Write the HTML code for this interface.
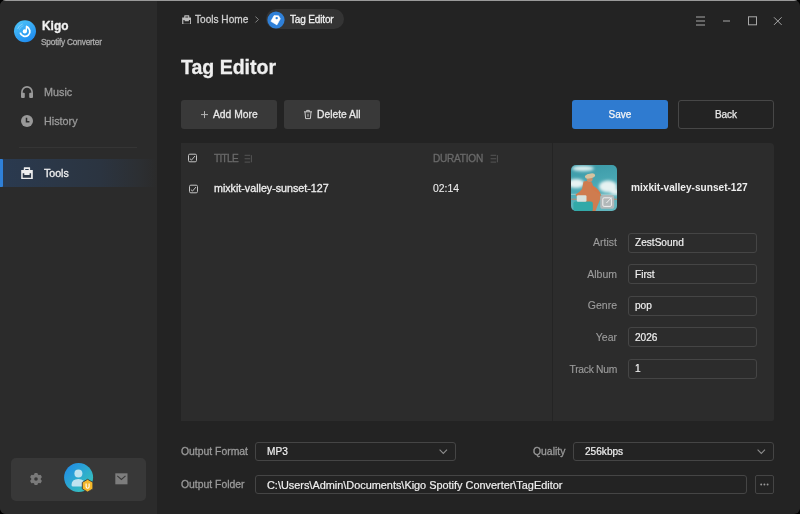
<!DOCTYPE html>
<html><head><meta charset="utf-8">
<style>
*{margin:0;padding:0;box-sizing:border-box}
html,body{width:800px;height:514px;overflow:hidden;background:#000}
body{font-family:"Liberation Sans",sans-serif;position:relative}
#win{position:absolute;left:0;top:0;width:800px;height:514px;border-radius:6px;overflow:hidden;background:#232323}
.a{position:absolute}
.t{position:absolute;line-height:1;white-space:nowrap;will-change:transform;-webkit-text-stroke-width:0.3px}
#side{position:absolute;left:0;top:0;width:157px;height:514px;background:#2b2b2b}
#topline{position:absolute;left:0;top:0;width:800px;height:1px;background:#9a9a9a}
.btn{position:absolute;border-radius:3px}
.inp{position:absolute;border:1px solid #454545;border-radius:3px}
.lbl{position:absolute;will-change:transform;line-height:1;white-space:nowrap;color:#9c9c9c;font-size:10.5px;text-align:right;margin-top:-0.5px;-webkit-text-stroke:0.12px #9c9c9c}
.val{position:absolute;will-change:transform;line-height:1;white-space:nowrap;color:#efefef;font-size:10.1px;margin-top:0.9px;-webkit-text-stroke:0.2px #efefef}
</style></head><body>
<div id="win">
  <div id="side">
    <!-- logo -->
    <svg class="a" style="left:13px;top:19px" width="24" height="24" viewBox="0 0 24 24">
      <defs><linearGradient id="lg" x1="0.2" y1="0" x2="0.8" y2="1"><stop offset="0" stop-color="#4cc3f8"/><stop offset="1" stop-color="#1c88ef"/></linearGradient></defs>
      <circle cx="12" cy="12.2" r="11" fill="url(#lg)"/>
      <path d="M13.4 7.8 A4.9 4.9 0 1 1 7.2 13.6" fill="none" stroke="#fff" stroke-width="1.8" stroke-linecap="butt"/>
      <circle cx="11.8" cy="12.4" r="2.1" fill="#fff"/>
      <path d="M13.2 12.4 L13.5 7.3 L15.6 8.6" fill="none" stroke="#fff" stroke-width="1.4" stroke-linejoin="round"/>
      <path d="M4.6 10 A7.8 7.8 0 0 1 9.6 5" fill="none" stroke="#ffffff" stroke-opacity="0.35" stroke-width="1"/>
      <path d="M6.3 10.8 A6.2 6.2 0 0 1 10.4 6.7" fill="none" stroke="#ffffff" stroke-opacity="0.3" stroke-width="0.8"/>
    </svg>
    <div class="t" style="left:41.6px;top:20.7px;font-size:11.9px;font-weight:700;color:#f2f2f2">Kigo</div>
    <div class="t" style="left:41px;top:37.6px;font-size:8.3px;letter-spacing:-0.2px;color:#acacac">Spotify Converter</div>

    <!-- music -->
    <svg class="a" style="left:20px;top:85px" width="14" height="14" viewBox="0 0 14 14">
      <path d="M1.9 9 V7 A5.1 5.1 0 0 1 12.1 7 V9" fill="none" stroke="#9a9a9a" stroke-width="1.6"/>
      <rect x="1" y="7.8" width="3.8" height="5.2" rx="1" fill="#9a9a9a"/>
      <rect x="9.2" y="7.8" width="3.8" height="5.2" rx="1" fill="#9a9a9a"/>
    </svg>
    <div class="t" style="left:43.5px;top:86.9px;font-size:10.8px;color:#9a9a9a">Music</div>

    <!-- history -->
    <svg class="a" style="left:20px;top:114px" width="14" height="14" viewBox="0 0 14 14">
      <circle cx="7" cy="7" r="6" fill="#999"/>
      <path d="M6.5 3.8 V7.7 H9.4" fill="none" stroke="#2b2b2b" stroke-width="1.5"/>
    </svg>
    <div class="t" style="left:43.5px;top:115.9px;font-size:10.8px;color:#9a9a9a">History</div>

    <div class="a" style="left:19px;top:147px;width:118px;height:1px;background:#353535"></div>

    <!-- tools active -->
    <div class="a" style="left:0;top:159px;width:157px;height:28px;background:linear-gradient(90deg,#2a3a50 0%,#2b3747 35%,#2b3440 64%,#2c2f33 88%,#2b2b2b 100%)"></div>
    <div class="a" style="left:0;top:159px;width:3px;height:28px;background:#2f80d8;border-radius:0 1px 1px 0"></div>
    <svg class="a" style="left:21px;top:167px" width="12" height="12" viewBox="0 0 12 12">
      <path d="M0.2 3.1 H11.8 V12 H0.2 Z M2.8 3.1 V0.8 Q2.8 0.3 3.3 0.3 H8.6 Q9.1 0.3 9.1 0.8 V3.1 H7.7 V1.9 H4.2 V3.1 Z" fill="#eeeeee"/><path d="M1.7 6.3 H3.3 V7.9 H8.6 V6.3 H10.1 V10.8 H1.7 Z" fill="#2c3848"/>
    </svg>
    <div class="t" style="left:43.5px;top:168px;font-size:10.6px;color:#f0f0f0">Tools</div>

    <!-- bottom card -->
    <div class="a" style="left:11px;top:457.5px;width:135px;height:43px;border-radius:5px;background:#383838"></div>
    <svg class="a" style="left:28.7px;top:472px" width="14" height="14" viewBox="0 0 14 14">
      <g fill="#7a7a7a" transform="translate(7 7)">
        <circle r="4.8"/>
        <rect x="-1.8" y="-6.1" width="3.6" height="12.2" rx="1.1"/>
        <rect x="-1.8" y="-6.1" width="3.6" height="12.2" rx="1.1" transform="rotate(60)"/>
        <rect x="-1.8" y="-6.1" width="3.6" height="12.2" rx="1.1" transform="rotate(120)"/>
      </g>
      <circle cx="7" cy="7" r="1.8" fill="#383838"/>
    </svg>
    <svg class="a" style="left:64px;top:463px" width="30" height="30" viewBox="0 0 30 30">
      <defs><linearGradient id="av" x1="0" y1="0" x2="1" y2="1"><stop offset="0" stop-color="#1e88ec"/><stop offset="1" stop-color="#3ccbb2"/></linearGradient></defs>
      <circle cx="14.6" cy="14.6" r="14.5" fill="url(#av)"/>
      <circle cx="14.4" cy="10.5" r="4" fill="#bfe3f0"/>
      <path d="M7.5 22 Q7.5 16 14.4 16 Q21 16 21 22 Q21 23.5 19.5 23.5 H9 Q7.5 23.5 7.5 22Z" fill="#bfe3f0"/>
    </svg>
    <svg class="a" style="left:81px;top:478px" width="14" height="15" viewBox="0 0 14 15">
      <path d="M6.6 1.3 L11.9 4.4 V10.9 L6.6 14 L1.3 10.9 V4.4 Z" fill="#f4b72a" stroke="#3a3a3a" stroke-width="0.9" stroke-linejoin="round"/>
      <path d="M5.1 5.5 V8.7 Q5.1 10.3 6.6 10.3 Q8.1 10.3 8.1 8.7 V5.5" fill="none" stroke="#fff" stroke-width="1.1"/>
    </svg>
    <svg class="a" style="left:115px;top:473px" width="14" height="12" viewBox="0 0 14 12">
      <rect x="0.3" y="0.3" width="12.2" height="11" fill="#7d7d7d"/>
      <path d="M2.3 2.9 L6.4 6.4 L10.5 2.9" fill="none" stroke="#3a3a3a" stroke-width="1.2"/>
    </svg>
  </div>
  <div id="topline"></div>

  <!-- breadcrumb -->
  <svg class="a" style="left:181.7px;top:14.6px" width="9.6" height="9.6" viewBox="0 0 12 12">
    <path d="M0.2 3.1 H11.8 V12 H0.2 Z M2.8 3.1 V0.8 Q2.8 0.3 3.3 0.3 H8.6 Q9.1 0.3 9.1 0.8 V3.1 H7.7 V1.9 H4.2 V3.1 Z" fill="#bdbdbd"/><path d="M1.7 6.3 H3.3 V7.9 H8.6 V6.3 H10.1 V10.8 H1.7 Z" fill="#232323"/>
  </svg>
  <div class="t" style="left:195px;top:14.5px;font-size:10.1px;color:#cfcfcf">Tools Home</div>
  <svg class="a" style="left:254px;top:15px" width="6" height="9" viewBox="0 0 6 9">
    <path d="M1.4 1.5 L4.4 4.5 L1.4 7.5" fill="none" stroke="#858585" stroke-width="1"/>
  </svg>
  <div class="a" style="left:266px;top:9px;width:78px;height:20px;border-radius:10px;background:#343434"></div>
  <svg class="a" style="left:266.6px;top:10.5px" width="18" height="18" viewBox="0 0 18 18">
    <circle cx="9" cy="9" r="8.6" fill="#2f80d8"/>
    <path d="M7.1 4.6 L11.6 4.8 L13.3 7.8 L9.9 13.9 L3.9 10.3 Z" fill="#fff" stroke="#fff" stroke-width="0.6" stroke-linejoin="round"/>
    <circle cx="9.7" cy="7.1" r="1.2" fill="#2f80d8"/>
  </svg>
  <div class="t" style="left:289.5px;top:14.6px;font-size:10px;letter-spacing:-0.15px;color:#f2f2f2">Tag Editor</div>

  <!-- window controls -->
  <svg class="a" style="left:690px;top:10px" width="100" height="20" viewBox="0 0 100 20">
    <g stroke="#a8a8a8" stroke-width="1" fill="none">
      <path d="M6 7 H15 M6 11 H15 M6 15 H15"/>
      <path d="M33 11 H40"/>
      <rect x="58.5" y="6.8" width="8" height="8"/>
      <path d="M84 7.3 L91.6 14.9 M91.6 7.3 L84 14.9"/>
    </g>
  </svg>

  <div class="t" style="left:180.5px;top:57.9px;font-size:19.5px;font-weight:700;color:#efefef">Tag Editor</div>

  <!-- buttons -->
  <div class="btn" style="left:181px;top:100px;width:96px;height:29px;background:#393939"></div>
  <svg class="a" style="left:200px;top:110px" width="10" height="10" viewBox="0 0 10 10">
    <path d="M4.5 1.1 V8.1 M1 4.6 H8" stroke="#b4b4b4" stroke-width="1"/>
  </svg>
  <div class="t" style="left:213px;top:109.5px;font-size:10.3px;color:#e8e8e8">Add More</div>
  <div class="btn" style="left:284px;top:100px;width:96px;height:29px;background:#393939"></div>
  <svg class="a" style="left:303px;top:109px" width="10" height="11" viewBox="0 0 10 11">
    <path d="M1 2.8 H9 M3.6 2.6 V1.4 H6.4 V2.6 M2 3 L2.6 9.6 H7.4 L8 3" fill="none" stroke="#ccc" stroke-width="1"/>
    <path d="M5 4.8 V7.8" stroke="#c4c4c4" stroke-width="0.9"/>
  </svg>
  <div class="t" style="left:316.5px;top:109.5px;font-size:10.3px;color:#e8e8e8">Delete All</div>

  <div class="btn" style="left:572px;top:100px;width:96px;height:29px;background:#2f7bd0"></div>
  <div class="t" style="left:572px;width:96px;text-align:center;top:109.9px;font-size:10px;color:#f5f5f5;-webkit-text-stroke:0.25px #f5f5f5">Save</div>
  <div class="btn" style="left:678px;top:100px;width:96px;height:29px;border:1px solid #474747"></div>
  <div class="t" style="left:678px;width:96px;text-align:center;top:109.9px;font-size:10px;color:#e8e8e8;-webkit-text-stroke:0.25px #e8e8e8">Back</div>

  <!-- panel -->
  <div class="a" style="left:181px;top:143px;width:593px;height:278px;background:#2c2c2c;border-radius:0 4px 2px 0"></div>
  <div class="a" style="left:552px;top:143px;width:1px;height:278px;background:#242424"></div>

  <svg class="a" style="left:187px;top:152px" width="12" height="12" viewBox="0 0 12 12">
    <rect x="1.5" y="2.2" width="8" height="7.6" rx="1.3" fill="none" stroke="#c4c4c4" stroke-width="1"/>
    <path d="M2.9 6.6 L4.5 8.1 L8 4" fill="none" stroke="#c4c4c4" stroke-width="1"/>
  </svg>
  <div class="t" style="left:214px;top:153.9px;font-size:10.1px;letter-spacing:-0.7px;color:#6a6a6a">TITLE</div>
  <svg class="a" style="left:243px;top:154px" width="10" height="10" viewBox="0 0 10 10">
    <path d="M1.6 1.3 H7.2 M1.6 4.75 H7.2 M1.6 8.1 H7.2 M8.4 1.2 V8.3" stroke="#5a5a5a" stroke-width="0.9"/>
  </svg>
  <div class="t" style="left:432.5px;top:153.9px;font-size:10.1px;letter-spacing:-0.25px;color:#6a6a6a">DURATION</div>
  <svg class="a" style="left:488.5px;top:154px" width="10" height="10" viewBox="0 0 10 10">
    <path d="M1.6 1.3 H7.2 M1.6 4.75 H7.2 M1.6 8.1 H7.2 M8.4 1.2 V8.3" stroke="#5a5a5a" stroke-width="0.9"/>
  </svg>

  <svg class="a" style="left:187.5px;top:182.5px" width="12" height="12" viewBox="0 0 12 12">
    <rect x="1.5" y="2.2" width="8" height="7.6" rx="1.3" fill="none" stroke="#c4c4c4" stroke-width="1"/>
    <path d="M2.9 6.6 L4.5 8.1 L8 4" fill="none" stroke="#c4c4c4" stroke-width="1"/>
  </svg>
  <div class="t" style="left:213.8px;top:183.1px;font-size:10.7px;color:#efefef;-webkit-text-stroke:0.3px #efefef">mixkit-valley-sunset-127</div>
  <div class="t" style="left:432.5px;top:183.9px;font-size:10.4px;color:#ececec;-webkit-text-stroke:0.1px #ececec">02:14</div>

  <!-- cover -->
  <svg class="a" style="left:571px;top:165px" width="46" height="46" viewBox="0 0 46 46">
    <defs>
      <clipPath id="cc"><rect width="46" height="46" rx="5"/></clipPath>
      <linearGradient id="sky" x1="0" y1="0" x2="0.2" y2="1"><stop offset="0" stop-color="#3a98a6"/><stop offset="0.5" stop-color="#4aa8b4"/><stop offset="1" stop-color="#63b6be"/></linearGradient>
      <filter id="bl" x="-20%" y="-20%" width="140%" height="140%"><feGaussianBlur stdDeviation="0.6"/></filter>
      <filter id="bl2" x="-20%" y="-20%" width="140%" height="140%"><feGaussianBlur stdDeviation="1.4"/></filter>
      <pattern id="dots" width="3" height="3" patternUnits="userSpaceOnUse"><rect width="3" height="3" fill="#d77a4a"/><circle cx="1" cy="1" r="0.7" fill="#6fa59a"/><circle cx="2.5" cy="2.4" r="0.5" fill="#e9c4a4"/></pattern>
    </defs>
    <g clip-path="url(#cc)">
      <rect width="46" height="46" fill="url(#sky)"/>
      <g filter="url(#bl2)">
        <ellipse cx="12" cy="3.5" rx="11" ry="2.8" fill="#dcefef"/>
        <ellipse cx="5" cy="18.5" rx="8.5" ry="4.5" fill="#e8f3f3"/>
        <ellipse cx="37" cy="21.5" rx="9" ry="6" fill="#e6f2f2"/>
        <ellipse cx="44" cy="27" rx="5" ry="3" fill="#e6f2f2"/>
      </g>
      <g filter="url(#bl)">
        <path d="M0 29.3 H46" stroke="#cfe2e2" stroke-width="0.7" opacity="0.8"/>
        <path d="M0 34.2 H46" stroke="#c4876a" stroke-width="0.9"/>
        <path d="M12.5 16.5 Q17 15 21 17.5 L23 24 Q28 26 30 29.5 Q29 36 26 42 L24.5 46 H13 Q14 40 11 36 Q6 33 4.5 29.5 Q9 27 11 24 Z" fill="#cf7c4f"/>
        <path d="M20 20 Q26 22 29.5 28 L28 29.8 Q24 25 20.5 24 Z" fill="#d3784a"/>
        <circle cx="18.6" cy="14" r="3" fill="#c98f6c"/>
        <ellipse cx="19" cy="11" rx="5.2" ry="2.4" fill="#d6c3a0" transform="rotate(-12 19 11)"/>
        <rect x="2.4" y="36.4" width="19.4" height="10" rx="2" fill="#30a9a8"/>
        <rect x="5.8" y="30.2" width="9.7" height="6.6" rx="1.2" fill="#d6e2de"/>
      </g>
      <rect x="29.2" y="30" width="14" height="13.8" rx="2.6" fill="#b8b8b8" fill-opacity="0.92"/>
      <rect x="31.8" y="32.8" width="8.6" height="8.6" rx="1.3" fill="none" stroke="#f0f0f0" stroke-width="1"/>
      <path d="M35.4 38 L40.8 32.4" stroke="#f0f0f0" stroke-width="1"/>
    </g>
  </svg>
  <div class="t" style="left:631px;top:183.2px;font-size:10.1px;font-weight:700;color:#eeeeee;-webkit-text-stroke-width:0">mixkit-valley-sunset-127</div>

  <!-- fields -->
  <div class="lbl" style="left:540px;width:77px;top:237.5px">Artist</div>
  <div class="inp" style="left:628px;top:232.5px;width:129px;height:20px"></div>
  <div class="val" style="left:634.5px;top:237.3px">ZestSound</div>

  <div class="lbl" style="left:540px;width:77px;top:269px">Album</div>
  <div class="inp" style="left:628px;top:264px;width:129px;height:20px"></div>
  <div class="val" style="left:634.5px;top:268.8px">First</div>

  <div class="lbl" style="left:540px;width:77px;top:300.6px">Genre</div>
  <div class="inp" style="left:628px;top:295.6px;width:129px;height:20px"></div>
  <div class="val" style="left:634.5px;top:300.4px">pop</div>

  <div class="lbl" style="left:540px;width:77px;top:332.2px">Year</div>
  <div class="inp" style="left:628px;top:327.2px;width:129px;height:20px"></div>
  <div class="val" style="left:634.5px;top:332px">2026</div>

  <div class="lbl" style="left:540px;width:77px;top:365px;font-size:10.3px;letter-spacing:-0.28px">Track Num</div>
  <div class="inp" style="left:628px;top:358.8px;width:129px;height:20px"></div>
  <div class="val" style="left:634.5px;top:363.6px">1</div>

  <!-- bottom -->
  <div class="t" style="left:180.5px;top:447.4px;font-size:10.4px;color:#9a9a9a">Output Format</div>
  <div class="inp" style="left:255px;top:442px;width:201px;height:19px"></div>
  <div class="val" style="left:266.5px;top:446.4px">MP3</div>
  <svg class="a" style="left:438px;top:448px" width="10" height="8" viewBox="0 0 10 8">
    <path d="M1.6 1.7 L5.3 5.4 L9 1.7" fill="none" stroke="#8e8e8e" stroke-width="1.1"/>
  </svg>
  <div class="t" style="left:533px;top:447.4px;font-size:10.4px;color:#9a9a9a">Quality</div>
  <div class="inp" style="left:573px;top:442px;width:201px;height:19px"></div>
  <div class="val" style="left:584.5px;top:446.4px">256kbps</div>
  <svg class="a" style="left:756px;top:448px" width="10" height="8" viewBox="0 0 10 8">
    <path d="M1.6 1.7 L5.3 5.4 L9 1.7" fill="none" stroke="#8e8e8e" stroke-width="1.1"/>
  </svg>

  <div class="t" style="left:180.5px;top:480.4px;font-size:10.4px;color:#9a9a9a">Output Folder</div>
  <div class="inp" style="left:255px;top:475px;width:492px;height:19px"></div>
  <div class="val" style="left:266.5px;top:479.4px;font-size:10.9px">C:\Users\Admin\Documents\Kigo Spotify Converter\TagEditor</div>
  <div class="inp" style="left:755px;top:475px;width:19px;height:19px;border-radius:2px"></div>
  <svg class="a" style="left:759px;top:482px" width="11" height="5" viewBox="0 0 11 5">
    <circle cx="2.2" cy="2.5" r="0.95" fill="#999"/><circle cx="5.4" cy="2.5" r="0.95" fill="#999"/><circle cx="8.6" cy="2.5" r="0.95" fill="#999"/>
  </svg>
</div>
</body></html>
